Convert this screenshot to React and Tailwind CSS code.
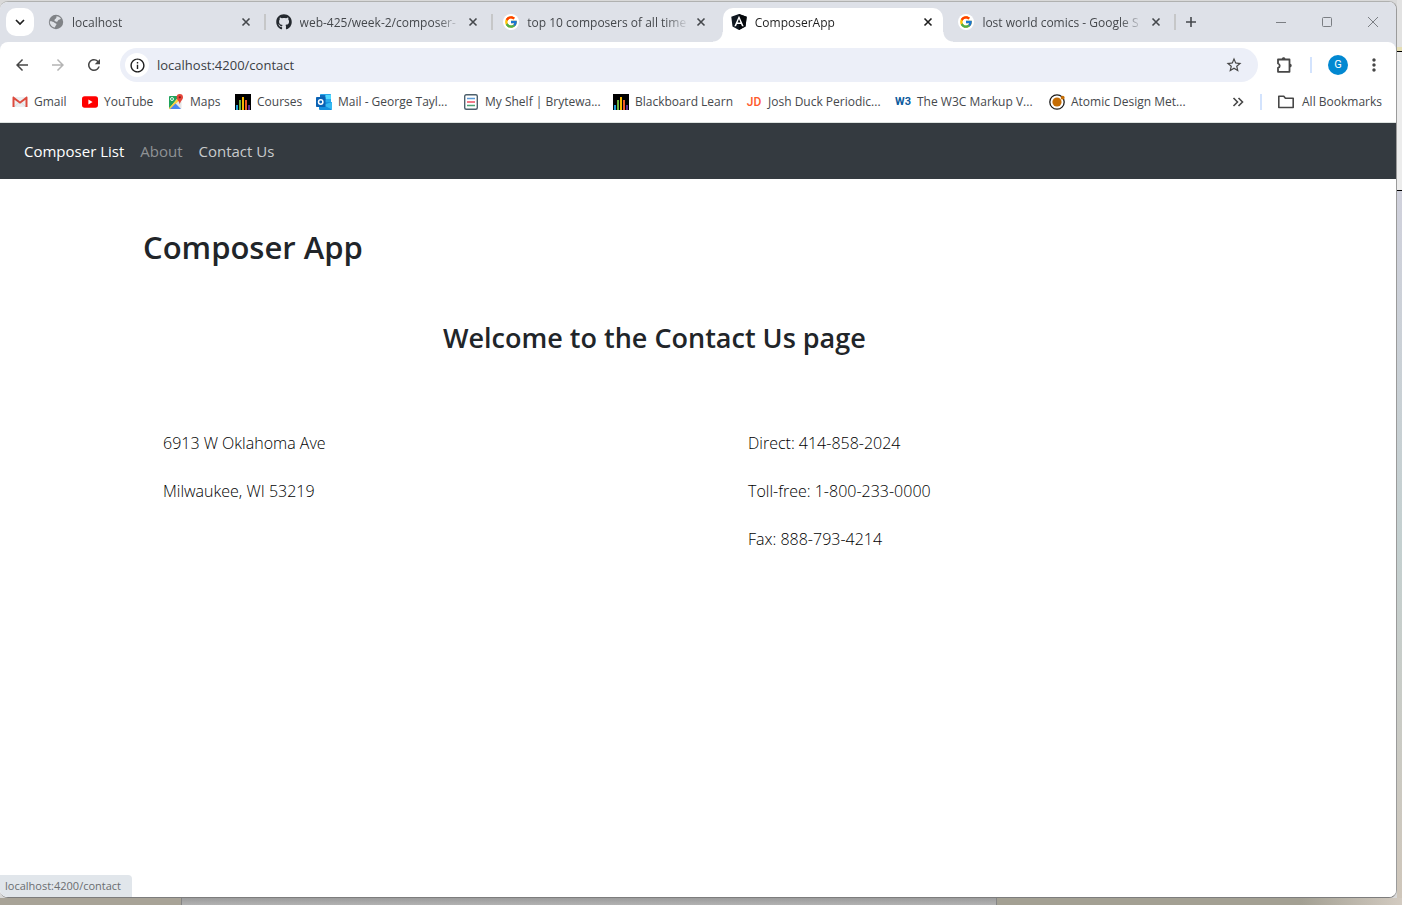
import React from "react";
import { FcGoogle } from "react-icons/fc";
import { FaGithub } from "react-icons/fa";
import {
  MdArrowBack,
  MdArrowForward,
  MdRefresh,
  MdInfoOutline,
  MdStarBorder,
  MdMoreVert,
} from "react-icons/md";

function GlobeIcon() {
  return (
    <svg viewBox="0 0 16 16" className="size-4">
      <circle cx="8" cy="8" r="7.2" fill="#808387" />
      <path d="M1.800 7.200C3.500 7 5 7.500 6.500 8.700c1 .8 2 .5 2 1.500s-1.300 1-1.500 3.300C4 13.200 1.600 10.500 1.800 7.200z" fill="#dee1e6" />
      <path d="M8.500 2.300c2 .1 3.500 1 4.400 2.300-.9 1.400-2 .8-2.700 1.600-.7.800-.5 1.600-1.900 1.500C6.800 7.600 6 6.600 6.700 5.600c.6-.9 2-.9 1.800-3.300z" fill="#dee1e6" />
    </svg>
  );
}

function GoogleIcon() {
  return (
    <span className="flex size-4 items-center justify-center rounded-full bg-white">
      <FcGoogle className="size-[14px]" />
    </span>
  );
}

function GithubIcon() {
  return <FaGithub className="size-4 text-[#24292f]" />;
}

function AngularIcon() {
  return (
    <svg viewBox="0 0 16 16" className="size-4">
      <path d="M8 0l7.700 2.700-1.200 9.800L8 16l-6.500-3.500L.3 2.700z" fill="#0f1720" />
      <path d="M8 0l7.700 2.700-1.200 9.800L8 16z" fill="#05080c" />
      <path d="M8 1.800L3.300 12.300H5l1-2.400h4l1 2.400h1.700zm0 3.300l1.400 3.300H6.600z" fill="#fff" />
    </svg>
  );
}

function CloseIcon() {
  return (
    <svg viewBox="0 0 10 10" className="size-[10px]" fill="none" stroke="currentColor" strokeWidth="1.600">
      <path d="M1.500 1.500l7 7M8.500 1.500l-7 7" />
    </svg>
  );
}

function GmailIcon() {
  return (
    <svg viewBox="0 0 16 16" className="size-4">
      <path d="M2 3h12v10H2z" fill="#eceff1" />
      <path d="M2 13l5-4.500M14 13L9 8.500" stroke="#cfd8dc" strokeWidth=".8" />
      <path d="M.5 3.500C.5 2.500 1.500 2.300 2.200 3L8 7.400 13.800 3c.7-.7 1.700-.5 1.700.5V13h-2V5.700L8 9.800 2.500 5.700V13h-2z" fill="#dd4b3e" />
    </svg>
  );
}

function YoutubeIcon() {
  return (
    <svg viewBox="0 0 16 16" className="size-4">
      <rect x="0" y="2.300" width="16" height="11.400" rx="2.600" fill="#f00" />
      <path d="M6.400 5.500v5l4.200-2.500z" fill="#fff" />
    </svg>
  );
}

function MapsIcon() {
  return (
    <svg viewBox="0 0 16 16" className="size-4">
      <rect x="1" y="2" width="12.500" height="13" rx="1" fill="#e6e6e6" />
      <path d="M1 3a1 1 0 011-1h9L1.500 14.500A1 1 0 011 14z" fill="#1fa35c" />
      <path d="M12.500 5L2 15.500 1 14 11 3z" fill="#fdd13a" />
      <path d="M7.500 9.500L13 15H2z" fill="#4a86f0" />
      <circle cx="4" cy="5" r="1.500" fill="none" stroke="#fff" strokeWidth=".9" />
      <path d="M11.800 0A3.300 3.300 0 0115 3.300c0 2.500-2.600 3.700-3.200 7.200-.6-3.500-3.200-4.700-3.200-7.200A3.300 3.300 0 0111.800 0z" fill="#e5453a" />
      <circle cx="11.800" cy="3.300" r="1.100" fill="#7b1f1a" />
    </svg>
  );
}

function BarsIcon() {
  return (
    <svg viewBox="0 0 16 16" className="size-4" shapeRendering="crispEdges">
      <rect width="16" height="16" fill="#000" />
      <rect x="1" y="11" width="2" height="5" fill="#1d9bd8" />
      <rect x="4" y="6" width="2" height="10" fill="#6cb33f" />
      <rect x="7" y="3" width="2" height="13" fill="#f5b800" />
      <rect x="10" y="6" width="2" height="10" fill="#ef5a28" />
      <rect x="13" y="11" width="2" height="5" fill="#5b2d90" />
    </svg>
  );
}

function OutlookIcon() {
  return (
    <svg viewBox="0 0 16 16" className="size-4">
      <rect x="4" y="0" width="11" height="13" rx=".8" fill="#28a8ea" />
      <path d="M4 1h5.500v5H4z" fill="#0f6cbd" />
      <path d="M9.500 1H15v4H9.500z" fill="#50d9ff" />
      <path d="M3 8.500L16 8v7a1 1 0 01-1 1H4a1 1 0 01-1-1z" fill="#1490df" />
      <path d="M16 8v7.500L7 11z" fill="#35b8f1" />
      <rect x="0" y="3" width="9.500" height="10" rx=".8" fill="#0a62b4" />
      <circle cx="4.700" cy="8" r="2.200" fill="none" stroke="#fff" strokeWidth="1.500" />
    </svg>
  );
}

function ShelfIcon() {
  return (
    <svg viewBox="0 0 16 16" className="size-4">
      <rect x="1.700" y=".7" width="12.600" height="14.600" rx="1.500" fill="#fff" stroke="#4e606c" strokeWidth="1.400" />
      <path d="M4 4.500h8" stroke="#5b9bd8" strokeWidth="1.300" />
      <path d="M4 8h8" stroke="#ec4c5f" strokeWidth="1.500" />
      <path d="M4 11.500h8" stroke="#4aa276" strokeWidth="1.300" />
    </svg>
  );
}

function AtomIcon() {
  return (
    <svg viewBox="0 0 16 16" className="size-4">
      <circle cx="8" cy="8" r="7.200" fill="#fff" stroke="#1d1d1d" strokeWidth="1.300" />
      <circle cx="8" cy="8" r="4.600" fill="#c56d05" />
      <circle cx="13.700" cy="3.700" r="1.900" fill="#c56d05" />
    </svg>
  );
}

function JdIcon() {
  return (
    <span className="w-4 text-center font-['Roboto',sans-serif] text-[12px] leading-4 font-medium text-[#ff5a2b]">JD</span>
  );
}

function W3Icon() {
  return (
    <span className="w-4 text-center font-['Roboto',sans-serif] text-[11px] leading-4 font-bold text-[#0b5a9c]">W3</span>
  );
}

function PuzzleIcon() {
  return (
    <svg viewBox="0 0 20 20" className="size-5" fill="none" stroke="#474747" strokeWidth="1.800" strokeLinejoin="round">
      <path d="M4 4.500h11.500v12.300H4v-3.900c2.300-.8 2.300-3.600 0-4.400z" />
      <path d="M7.800 4c0-2.400 3.600-2.400 3.600 0zM16 8.700c2.300 0 2.300 3.600 0 3.600z" fill="#474747" stroke="none" />
    </svg>
  );
}

const tabs = [
  { title: "localhost", Icon: GlobeIcon, divider: true },
  { title: "web-425/week-2/composer-", Icon: GithubIcon, divider: true },
  { title: "top 10 composers of all time", Icon: GoogleIcon },
  { title: "ComposerApp", Icon: AngularIcon, active: true },
  { title: "lost world comics - Google S", Icon: GoogleIcon, divider: true },
];

const bookmarks = [
  { label: "Gmail", Icon: GmailIcon },
  { label: "YouTube", Icon: YoutubeIcon },
  { label: "Maps", Icon: MapsIcon },
  { label: "Courses", Icon: BarsIcon },
  { label: "Mail - George Tayl...", Icon: OutlookIcon },
  { label: "My Shelf | Brytewa...", Icon: ShelfIcon },
  { label: "Blackboard Learn", Icon: BarsIcon },
  { label: "Josh Duck Periodic...", Icon: JdIcon },
  { label: "The W3C Markup V...", Icon: W3Icon },
  { label: "Atomic Design Met...", Icon: AtomIcon },
];

function Tab({ title, Icon, active, divider }) {
  return (
    <div
      className={
        active
          ? "relative flex h-[34px] min-w-0 flex-1 items-center rounded-t-[10px] bg-white pr-[7px] pb-[6px] pl-2 text-[#1f1f1f]"
          : "relative flex h-[34px] min-w-0 flex-1 items-center pr-[7px] pb-[6px] pl-2 text-[#45484c]"
      }
    >
      {active && (
        <>
          <span className="absolute bottom-0 -left-[10px] size-[10px] bg-[radial-gradient(circle_at_0_0,transparent_9px,white_10px)]" />
          <span className="absolute -right-[10px] bottom-0 size-[10px] bg-[radial-gradient(circle_at_100%_0,transparent_9px,white_10px)]" />
        </>
      )}
      <button type="button" className="flex min-w-0 flex-1 items-center gap-2 text-left">
        <span className="shrink-0"><Icon /></span>
        <span className="min-w-0 flex-1 overflow-hidden pt-px text-[12px] leading-4 font-medium whitespace-nowrap [mask-image:linear-gradient(to_right,black_calc(100%-24px),transparent)]">
          {title}
        </span>
      </button>
      <button type="button" aria-label={"Close " + title} className="ml-1 flex size-4 shrink-0 items-center justify-center">
        <CloseIcon />
      </button>
      {divider && <span className="absolute top-[6px] -right-[5px] h-4 w-[2px] bg-[#c6c7c8]" />}
    </div>
  );
}

function TabStrip() {
  return (
    <header className="flex h-10 items-end bg-[#dee1e8]">
      <button type="button" aria-label="Search tabs" className="mr-[6px] mb-[6px] ml-[6px] flex size-7 shrink-0 items-center justify-center rounded-[10px] bg-white">
        <svg viewBox="0 0 10 10" className="size-[10px]" fill="none" stroke="#1f1f1f" strokeWidth="1.700">
          <path d="M1 3l4 4 4-4" />
        </svg>
      </button>
      <div className="flex max-w-[1131px] min-w-0 flex-1 gap-[7px]">
        {tabs.map((t, i) => (
          <Tab key={i} {...t} />
        ))}
      </div>
      <button type="button" aria-label="New tab" className="mb-[6px] ml-[6px] flex size-7 shrink-0 items-center justify-center">
        <svg viewBox="0 0 12 12" className="size-3" fill="none" stroke="#45484c" strokeWidth="1.600">
          <path d="M6 1v10M1 6h10" />
        </svg>
      </button>
      <div className="ml-auto flex h-10 shrink-0 items-center text-[#7b7e83]">
        <button type="button" aria-label="Minimize" className="flex h-10 w-[46px] items-center justify-center">
          <svg viewBox="0 0 10 10" className="size-[10px]" fill="none" stroke="currentColor"><path d="M0 5.500h10" /></svg>
        </button>
        <button type="button" aria-label="Maximize" className="flex h-10 w-[46px] items-center justify-center">
          <svg viewBox="0 0 10 10" className="size-[10px]" fill="none" stroke="currentColor"><rect x=".5" y=".5" width="9" height="9" rx="1" /></svg>
        </button>
        <button type="button" aria-label="Close window" className="flex h-10 w-[46px] items-center justify-center">
          <svg viewBox="0 0 10 10" className="size-[10px]" fill="none" stroke="currentColor"><path d="M0 0l10 10M10 0L0 10" /></svg>
        </button>
      </div>
    </header>
  );
}

function Toolbar() {
  return (
    <div className="bg-[#dee1e8]">
      <div className="flex h-[46px] items-center rounded-t-lg bg-white pl-[13px] pr-3">
        <div className="flex shrink-0 gap-[18px] text-[#474747]">
          <button type="button" aria-label="Back"><MdArrowBack className="size-[18px]" /></button>
          <button type="button" aria-label="Forward" className="text-[#b4b4b4]"><MdArrowForward className="size-[18px]" /></button>
          <button type="button" aria-label="Reload"><MdRefresh className="size-[18px]" /></button>
        </div>
        <div className="ml-[17px] flex h-[34px] min-w-0 flex-1 items-center rounded-full bg-[#eceff8] pr-[15px] pl-[5px]">
          <button type="button" aria-label="View site information" className="flex size-6 shrink-0 items-center justify-center rounded-full bg-white">
            <MdInfoOutline className="size-[17px] text-[#1f1f1f]" />
          </button>
          <input
            aria-label="Address"
            defaultValue="localhost:4200/contact"
            className="ml-2 min-w-0 flex-1 bg-transparent text-[13px] leading-5 text-[#3b3e44] outline-none"
          />
          <button type="button" aria-label="Bookmark this page"><MdStarBorder className="size-[18px] text-[#474747]" /></button>
        </div>
        <div className="ml-4 flex shrink-0 items-center">
          <button type="button" aria-label="Extensions"><PuzzleIcon /></button>
          <span className="ml-4 h-4 w-[2px] bg-[#d3e3fd]" />
          <button type="button" aria-label="Profile" className="ml-4 flex size-5 items-center justify-center rounded-full bg-[#0288d1] font-['Roboto',sans-serif] text-[11px] leading-4 text-white">
            G
          </button>
          <button type="button" aria-label="Menu" className="ml-4"><MdMoreVert className="size-5 text-[#474747]" /></button>
        </div>
      </div>
    </div>
  );
}

function BookmarksBar() {
  return (
    <nav aria-label="Bookmarks" className="flex h-[35px] items-center border-b border-[#dde2e0] bg-white pt-[1px] pb-[7px] pr-[14px] pl-3 text-[12px] leading-5 font-medium text-[#45484c]">
      <div className="grid min-w-0 flex-1 grid-cols-[70px_86px_67px_81px_147px_150px_133px_149px_154px_1fr]">
        {bookmarks.map(({ label, Icon }, i) => (
          <a key={i} href="#" className="flex items-center gap-[6px] whitespace-nowrap">
            <Icon />
            {label}
          </a>
        ))}
      </div>
      <button type="button" aria-label="More bookmarks" className="flex shrink-0">
        <svg viewBox="0 0 12 12" className="size-3" fill="none" stroke="#474747" strokeWidth="1.600">
          <path d="M1.500 2l4 4-4 4M6.500 2l4 4-4 4" />
        </svg>
      </button>
      <span className="ml-[16px] h-4 w-[2px] shrink-0 bg-[#d3e3fd]" />
      <button type="button" className="ml-4 flex shrink-0 items-center gap-2 whitespace-nowrap">
        <svg viewBox="0 0 16 16" className="size-4" fill="none" stroke="#474747" strokeWidth="1.600" strokeLinejoin="round">
          <path d="M.8 2.300h5l1.600 1.900h7.800v9.300H.8z" />
        </svg>
        All Bookmarks
      </button>
    </nav>
  );
}

function Page() {
  return (
    <div className="flex flex-1 flex-col bg-white text-[#212529]">
      <nav aria-label="Main" className="flex h-14 items-center gap-4 bg-[#343a40] px-6 text-[15px] leading-6">
        <a href="#list" className="text-white">Composer List</a>
        <a href="#about" className="text-[#8f9295]">About</a>
        <a href="#contact" className="text-[#c8cacc]">Contact Us</a>
      </nav>
      <main className="mx-auto w-full max-w-[1110px] pt-12">
        <h1 className="text-[31px] leading-10 font-semibold">Composer App</h1>
        <h2 className="mt-[53px] pl-[300px] text-[27px] leading-9 font-semibold">Welcome to the Contact Us page</h2>
        <div className="mt-[75px] grid grid-cols-[585px_1fr] pl-5 text-[16px] leading-6 font-light text-black">
          <address className="flex flex-col gap-6 not-italic">
            <p>6913 W Oklahoma Ave</p>
            <p>Milwaukee, WI 53219</p>
          </address>
          <div className="flex flex-col gap-6">
            <p>Direct: 414-858-2024</p>
            <p>Toll-free: 1-800-233-0000</p>
            <p>Fax: 888-793-4214</p>
          </div>
        </div>
      </main>
    </div>
  );
}

export default function App() {
  return (
    <div className="flex min-h-screen flex-col bg-[#d9d9d9] font-['Open_Sans','Noto_Sans',sans-serif]">
      <div className="flex flex-1 pt-px">
        <div className="relative flex min-w-0 flex-1 flex-col overflow-hidden rounded-lg border-t border-r border-b border-t-[#b0b1b0] border-r-[#9b9b9b] border-b-[#7d7d7d] bg-white">
          <TabStrip />
          <Toolbar />
          <BookmarksBar />
          <Page />
          <div role="status" className="absolute bottom-0 left-0 flex h-[22px] w-[132px] items-center rounded-tr bg-[#e1e6eb] pl-[5px] text-[11px] leading-4 text-[#6a6d70]">
            localhost:4200/contact
          </div>
        </div>
        <div className="-mt-px flex w-[5px] shrink-0 flex-col">
          <div className="h-[51px] border-b-4 border-[#e6dfb4] bg-[#e2e2e2]" />
          <div className="h-[140px] border-y border-black bg-[#ececec]" />
          <div className="flex-1 bg-linear-to-b from-[#d0d1dc] via-[#c4d0d0] to-[#cfc6ba]" />
        </div>
      </div>
      <div className="flex h-[7px] shrink-0">
        <div className="w-[182px] border-r border-[#858585] bg-[#a8a397]" />
        <div className="w-[815px] border-r border-[#858585] bg-linear-to-b from-[#9c9c9c] to-[#b2b2b2]" />
        <div className="flex-1 bg-linear-to-r from-[#a3a093] from-75% to-[#d3cbc1]" />
      </div>
    </div>
  );
}
